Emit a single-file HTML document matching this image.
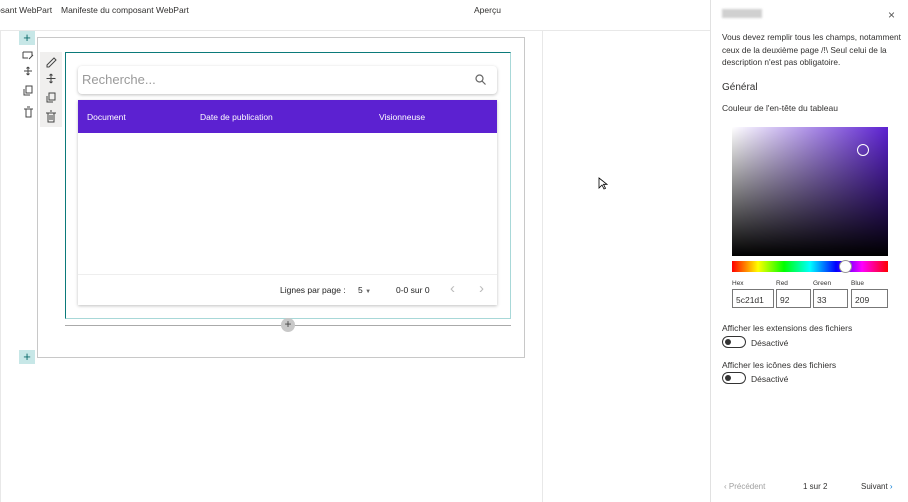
<!DOCTYPE html>
<html><head><meta charset="utf-8"><style>
*{box-sizing:border-box;margin:0;padding:0}
body{width:908px;height:502px;position:relative;overflow:hidden;background:#fff;font-family:"Liberation Sans",sans-serif;color:#323130}
.a{position:absolute}
.s{font-size:8.5px}
</style></head><body>
<div class="a s" style="left:-4px;top:5px">osant WebPart</div>
<div class="a s" style="left:61px;top:5px">Manifeste du composant WebPart</div>
<div class="a s" style="left:474px;top:5px">Aperçu</div>
<div class="a" style="left:0;top:30px;width:710px;height:1px;background:#e8e8e8"></div>
<div class="a" style="left:0;top:31px;width:1px;height:471px;background:#e8e8e8"></div>
<div class="a" style="left:542px;top:31px;width:1px;height:471px;background:#e8e8e8"></div>
<div class="a" style="left:37px;top:37px;width:488px;height:321px;border:1px solid #c8c8c8"></div>
<div class="a" style="left:19px;top:31px;width:16px;height:14px;background:#c7e7e7;color:#0b6a6a;font-size:13px;text-align:center;line-height:13px">+</div>
<div class="a" style="left:19px;top:350px;width:16px;height:14px;background:#c7e7e7;color:#0b6a6a;font-size:13px;text-align:center;line-height:13px">+</div>
<svg class="a" style="left:20px;top:49px" width="16" height="70" fill="none" stroke="#444" stroke-width="1">
<path d="M3 3h9v4M3 3v6h5M9 10l4-4"/><path d="M8 18v8M4 22h8M8 18l-1.5 1.5M8 18l1.5 1.5M8 26l-1.5-1.5M8 26l1.5-1.5"/>
<rect x="6" y="37" width="6" height="7"/><path d="M4 40v6h6"/><path d="M4 60h9M6 60v8h5v-8M7 58h3"/></svg>
<div class="a" style="left:40px;top:52px;width:22px;height:75px;background:#f0efee"></div>
<svg class="a" style="left:43px;top:54px" width="16" height="72" fill="none" stroke="#444" stroke-width="1">
<path d="M4 11l7-7 2 2-7 7H4z"/><path d="M8 20v9M3.5 24.5h9M8 20l-1.5 1.5M8 20l1.5 1.5M8 29l-1.5-1.5M8 29l1.5-1.5"/>
<rect x="6" y="39" width="6" height="7"/><path d="M4 42v6h6"/><path d="M3 59h10M5 59v9h6v-9M7 57h2M7 61v5M9 61v5"/></svg>
<div class="a" style="left:65px;top:52px;width:446px;height:267px;border:1px solid #0b7a7a;border-right-color:#a8d8d8;border-bottom-color:#a8d8d8"></div>
<div class="a" style="left:78px;top:66px;width:419px;height:28px;border-radius:4px;box-shadow:0 1px 3px rgba(0,0,0,.25)"></div>
<div class="a" style="left:82px;top:72px;font-size:13px;color:#9a9a9a">Recherche...</div>
<svg class="a" style="left:475px;top:74px" width="11" height="11" fill="none" stroke="#666" stroke-width="1.2"><circle cx="4.5" cy="4.5" r="3.5"/><path d="M7 7l3.5 3.5"/></svg>
<div class="a" style="left:78px;top:100px;width:419px;height:205px;box-shadow:0 1px 3px rgba(0,0,0,.25)"></div>
<div class="a" style="left:78px;top:100px;width:419px;height:33px;background:#5c21d1;color:#fff;font-size:8.5px">
<span class="a" style="left:9px;top:12px">Document</span><span class="a" style="left:122px;top:12px">Date de publication</span><span class="a" style="left:301px;top:12px">Visionneuse</span></div>
<div class="a" style="left:78px;top:274px;width:419px;height:1px;background:#eee"></div>
<div class="a s" style="left:280px;top:285px;color:#222">Lignes par page :</div>
<div class="a s" style="left:358px;top:285px;color:#222">5 <span style="font-size:6px;color:#666">▼</span></div>
<div class="a s" style="left:396px;top:285px;color:#222">0-0 sur 0</div>
<div class="a" style="left:450px;top:280px;font-size:15px;color:#bbb">‹</div>
<div class="a" style="left:479px;top:280px;font-size:15px;color:#bbb">›</div>
<div class="a" style="left:65px;top:325px;width:446px;height:1px;background:#aaa"></div>
<div class="a" style="left:281px;top:318px;width:14px;height:14px;border-radius:50%;background:#c8c8c8;color:#444;font-size:12px;text-align:center;line-height:13px">+</div>
<svg class="a" style="left:598px;top:177px" width="10" height="13"><path d="M1 1v10l3-3 2 4 1.5-.7-2-4H9z" fill="#fff" stroke="#000" stroke-width=".8"/></svg>
<div class="a" style="left:710px;top:0;width:198px;height:502px;border-left:1px solid #e1e1e1;background:#fff"></div>
<div class="a" style="left:722px;top:9px;width:40px;height:9px;background:#d0d0d0;filter:blur(1px)"></div>
<div class="a" style="left:888px;top:8px;font-size:12px;color:#555">×</div>
<div class="a" style="left:722px;top:31px;width:180px;font-size:8.3px;line-height:12.5px">Vous devez remplir tous les champs, notamment ceux de la deuxième page /!\ Seul celui de la description n'est pas obligatoire.</div>
<div class="a" style="left:722px;top:82px;font-size:10px">Général</div>
<div class="a s" style="left:722px;top:103px">Couleur de l'en-tête du tableau</div>
<div class="a" style="left:732px;top:127px;width:156px;height:129px;background:linear-gradient(to top,#000,transparent),linear-gradient(to right,#fff,#5c21d1)"></div>
<div class="a" style="left:857px;top:144px;width:12px;height:12px;border:1.5px solid #fff;border-radius:50%"></div>
<div class="a" style="left:732px;top:261px;width:156px;height:11px;background:linear-gradient(to right,red,#ff0,#0f0,#0ff,#00f,#f0f,red)"></div>
<div class="a" style="left:839px;top:260px;width:13px;height:13px;border-radius:50%;background:#fff;border:1px solid #999"></div>
<div class="a" style="left:732px;top:280px;font-size:6.5px">Hex</div>
<div class="a" style="left:776px;top:280px;font-size:6.5px">Red</div>
<div class="a" style="left:813px;top:280px;font-size:6.5px">Green</div>
<div class="a" style="left:851px;top:280px;font-size:6.5px">Blue</div>
<div class="a s" style="left:732px;top:289px;width:42px;height:19px;border:1px solid #777;padding:5px 3px">5c21d1</div>
<div class="a s" style="left:776px;top:289px;width:35px;height:19px;border:1px solid #777;padding:5px 3px">92</div>
<div class="a s" style="left:813px;top:289px;width:35px;height:19px;border:1px solid #777;padding:5px 3px">33</div>
<div class="a s" style="left:851px;top:289px;width:37px;height:19px;border:1px solid #777;padding:5px 3px">209</div>
<div class="a s" style="left:722px;top:323px">Afficher les extensions des fichiers</div>
<div class="a" style="left:722px;top:336px;width:24px;height:12px;border:1px solid #333;border-radius:6px"><div style="position:absolute;left:2px;top:2px;width:6px;height:6px;border-radius:50%;background:#333"></div></div>
<div class="a s" style="left:751px;top:338px">Désactivé</div>
<div class="a s" style="left:722px;top:360px">Afficher les icônes des fichiers</div>
<div class="a" style="left:722px;top:372px;width:24px;height:12px;border:1px solid #333;border-radius:6px"><div style="position:absolute;left:2px;top:2px;width:6px;height:6px;border-radius:50%;background:#333"></div></div>
<div class="a s" style="left:751px;top:374px">Désactivé</div>
<div class="a" style="left:724px;top:482px;font-size:8px;color:#a0a0a0">‹ Précédent</div>
<div class="a" style="left:803px;top:482px;font-size:8px">1 sur 2</div>
<div class="a" style="left:861px;top:482px;font-size:8px">Suivant <span style="color:#0078d4">›</span></div>
</body></html>
